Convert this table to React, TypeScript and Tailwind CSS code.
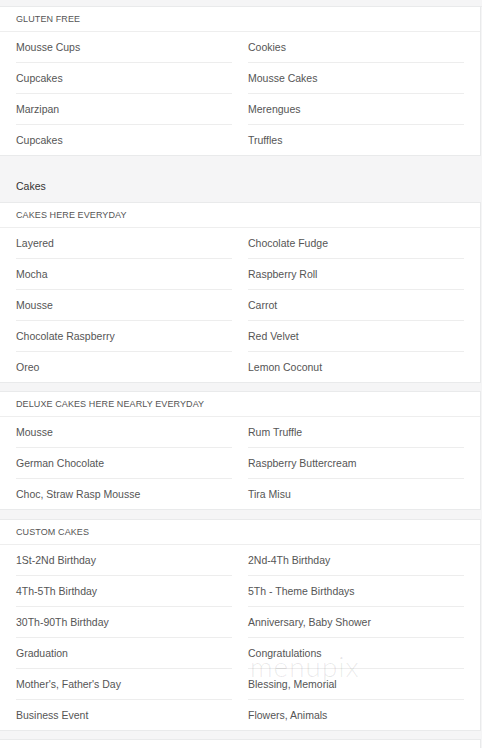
import React from "react";

type Section = { title: string; items: string[] };

const glutenFree: Section = {
  title: "Gluten Free",
  items: ["Mousse Cups", "Cookies", "Cupcakes", "Mousse Cakes", "Marzipan", "Merengues", "Cupcakes", "Truffles"],
};

const cakes: Section[] = [
  {
    title: "Cakes Here Everyday",
    items: [
      "Layered",
      "Chocolate Fudge",
      "Mocha",
      "Raspberry Roll",
      "Mousse",
      "Carrot",
      "Chocolate Raspberry",
      "Red Velvet",
      "Oreo",
      "Lemon Coconut",
    ],
  },
  {
    title: "Deluxe Cakes Here Nearly Everyday",
    items: ["Mousse", "Rum Truffle", "German Chocolate", "Raspberry Buttercream", "Choc, Straw Rasp Mousse", "Tira Misu"],
  },
  {
    title: "Custom Cakes",
    items: [
      "1St-2Nd Birthday",
      "2Nd-4Th Birthday",
      "4Th-5Th Birthday",
      "5Th - Theme Birthdays",
      "30Th-90Th Birthday",
      "Anniversary, Baby Shower",
      "Graduation",
      "Congratulations",
      "Mother's, Father's Day",
      "Blessing, Memorial",
      "Business Event",
      "Flowers, Animals",
    ],
  },
];

function Panel({ section, mt }: { section: Section; mt?: string }) {
  const n = section.items.length;
  return (
    <div className={"w-[481px] bg-white border-y border-r border-[#e9eaeb] " + (mt ?? "")}>
      <div className="h-[25px] border-b border-[#eeeeee] pl-4 pt-[2px] flex items-center">
        <span className="text-[9px] uppercase text-[#555] tracking-[0.1px]">{section.title}</span>
      </div>
      <div className="grid grid-cols-2 gap-x-4 pl-4 pr-[16px]">
        {section.items.map((it, i) => (
          <div
            key={i}
            className={
              "flex items-center pt-[2px] text-[10.5px] text-[#555] " +
              (i < n - 2 ? "h-[31px] border-b border-[#ededed]" : "h-[30px]")
            }
          >
            {it}
          </div>
        ))}
      </div>
    </div>
  );
}

export default function App() {
  return (
    <div
      className="relative w-[482px] h-[748px] overflow-hidden bg-[#f5f5f6]"
      style={{ fontFamily: '"Liberation Sans", Arial, sans-serif' }}
    >
      <div className="h-[7px] border-b border-[#ebebeb]" />
      <Panel section={glutenFree} mt="-mt-px" />

      <div className="h-[46px] pl-4 pt-[24px] text-[10.5px] leading-[12px] text-[#333]">Cakes</div>

      <Panel section={cakes[0]} />
      <Panel section={cakes[1]} mt="mt-[8px]" />
      <Panel section={cakes[2]} mt="mt-[9px]" />

      <div className="mt-[8px] h-[20px] w-[481px] bg-white border-t border-r border-[#e9eaeb]" />

      {/* watermark */}
      <span
        className="absolute left-[250px] top-[652px] text-[28px] font-light text-black/[0.09] tracking-[1px] leading-none"
        style={{ fontFamily: "Lato, sans-serif" }}
      >
        menupix
      </span>
    </div>
  );
}
